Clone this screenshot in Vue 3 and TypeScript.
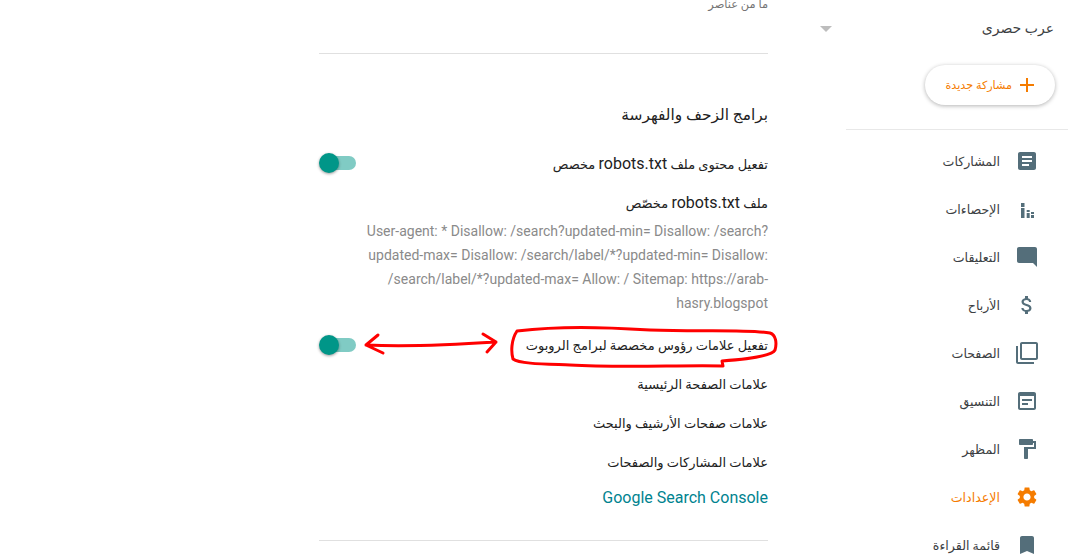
<script setup lang="ts">
interface NavItem { label: string; path: string; active?: boolean }
const nav: NavItem[] = [
  { label: 'المشاركات', path: 'M19 3H5c-1.1 0-2 .9-2 2v14c0 1.1.9 2 2 2h14c1.1 0 2-.9 2-2V5c0-1.1-.9-2-2-2zm-5 14H7v-2h7v2zm3-4H7v-2h10v2zm0-4H7V7h10v2z' },
  { label: 'الإحصاءات', path: 'M6 6h3.5v4H6zM6 11h3.5v10H6zM11.7 13h3v2h-3zM11.7 16h3v5h-3zM16 15h3v2h-3zM16 18h3v3h-3z' },
  { label: 'التعليقات', path: 'M21.99 4c0-1.1-.89-2-1.99-2H4c-1.1 0-2 .9-2 2v12c0 1.1.9 2 2 2h14l4 4-.01-18z' },
  { label: 'الأرباح', path: 'M11.8 10.9c-2.27-.59-3-1.2-3-2.15 0-1.09 1.01-1.85 2.7-1.85 1.78 0 2.44.85 2.5 2.1h2.21c-.07-1.72-1.12-3.3-3.21-3.81V3h-3v2.16c-1.94.42-3.5 1.68-3.5 3.61 0 2.31 1.91 3.46 4.7 4.13 2.5.6 3 1.48 3 2.41 0 .69-.49 1.79-2.7 1.79-2.06 0-2.87-.92-2.98-2.1h-2.2c.12 2.19 1.76 3.42 3.68 3.83V21h3v-2.15c1.95-.37 3.5-1.5 3.5-3.55 0-2.84-2.43-3.81-4.7-4.4z' },
  { label: 'الصفحات', path: 'M3 5H1v16c0 1.1.9 2 2 2h16v-2H3V5zm18-4H7c-1.1 0-2 .9-2 2v14c0 1.1.9 2 2 2h14c1.1 0 2-.9 2-2V3c0-1.1-.9-2-2-2zm0 16H7V3h14v14z' },
  { label: 'التنسيق', path: 'M19 3H5c-1.1 0-2 .9-2 2v14c0 1.1.9 2 2 2h14c1.1 0 2-.9 2-2V5c0-1.1-.9-2-2-2zm0 16H5V7h14v12zM7 10h10v2H7zM7 14h6v2H7z' },
  { label: 'المظهر', path: 'M18 4V3c0-.55-.45-1-1-1H5c-.55 0-1 .45-1 1v4c0 .55.45 1 1 1h12c.55 0 1-.45 1-1V6h1v4H9v11c0 .55.45 1 1 1h2c.55 0 1-.45 1-1v-9h8V4h-3z' },
  { label: 'الإعدادات', active: true, path: 'M19.14 12.94c.04-.3.06-.61.06-.94 0-.32-.02-.64-.07-.94l2.03-1.58c.18-.14.23-.41.12-.61l-1.92-3.32c-.12-.22-.37-.29-.59-.22l-2.39.96c-.5-.38-1.03-.7-1.62-.94l-.36-2.54c-.04-.24-.24-.41-.48-.41h-3.84c-.24 0-.43.17-.47.41l-.36 2.54c-.59.24-1.13.57-1.62.94l-2.39-.96c-.22-.08-.47 0-.59.22L2.74 8.87c-.12.21-.08.47.12.61l2.03 1.58c-.05.3-.09.63-.09.94s.02.64.07.94l-2.03 1.58c-.18.14-.23.41-.12.61l1.92 3.32c.12.22.37.29.59.22l2.39-.96c.5.38 1.03.7 1.62.94l.36 2.54c.05.24.24.41.48.41h3.84c.24 0 .44-.17.47-.41l.36-2.54c.59-.24 1.13-.56 1.62-.94l2.39.96c.22.08.47 0 .59-.22l1.92-3.32c.12-.22.07-.47-.12-.61l-2.01-1.58zM12 15.6c-1.98 0-3.6-1.62-3.6-3.6s1.62-3.6 3.6-3.6 3.6 1.62 3.6 3.6-1.62 3.6-3.6 3.6z' },
  { label: 'قائمة القراءة', path: 'M17 3H7c-1.1 0-1.99.9-1.99 2L5 21l7-3 7 3V5c0-1.1-.9-2-2-2z' },
]
const robots = 'User-agent: * Disallow: /search?updated-min= Disallow: /search?updated-max= Disallow: /search/label/*?updated-min= Disallow: /search/label/*?updated-max= Allow: / Sitemap: https://arab-hasry.blogspot'
</script>

<template>
  <div class="page" dir="rtl">
    <aside class="side">
      <div class="blog">عرب حصرى</div>
      <div class="new-wrap">
        <button class="new">
          <svg class="plus" viewBox="0 0 16 16" width="16" height="16"><path d="M7 1h2v6h6v2H9v6H7V9H1V7h6z" /></svg>
          <span>مشاركة جديدة</span>
        </button>
      </div>
      <hr class="side-rule" />
      <ul class="nav">
        <li v-for="item in nav" :key="item.label" class="nav-item" :class="{ active: item.active }">
          <svg viewBox="0 0 24 24" width="24" height="24" class="nav-icon"><path :d="item.path" /></svg>
          <span>{{ item.label }}</span>
        </li>
      </ul>
    </aside>

    <div class="gutter"><span class="caret"></span></div>

    <main class="main">
      <p class="empty">ما من عناصر</p>
      <hr class="rule first" />
      <h2 class="title">برامج الزحف والفهرسة</h2>
      <div class="row r-toggle">
        <span>تفعيل محتوى ملف <span class="latin">robots.txt</span> مخصص</span>
        <span class="switch"><i></i></span>
      </div>
      <div class="row r-file"><span>ملف <span class="latin">robots.txt</span> مخصّص</span></div>
      <p class="robots"><bdi>{{ robots }}</bdi></p>
      <div class="row r-headers">
        <span>تفعيل علامات رؤوس مخصصة لبرامج الروبوت</span>
        <span class="switch"><i></i></span>
      </div>
      <div class="row r-plain">علامات الصفحة الرئيسية</div>
      <div class="row r-plain">علامات صفحات الأرشيف والبحث</div>
      <div class="row r-plain">علامات المشاركات والصفحات</div>
      <a class="link">Google Search Console</a>
      <hr class="rule last" />
    </main>

    <svg class="marks" width="1068" height="555" viewBox="0 0 1068 555" fill="none" stroke="#f00" stroke-width="3" stroke-linecap="round" stroke-linejoin="round">
      <path d="M517 331C560 326 600 327 650 330C700 332 745 329 770 333C776 335 777 343 775 350C772 356 750 359 722 361L723 366C680 365 620 368 570 365C545 364 520 364 513 359C511 352 511 340 517 331Z" />
      <path d="M366 345C410 347 450 345 496 342M378 335L366 345L383 353M483 334L496 342L487 352" />
    </svg>
  </div>
</template>

<style>
html, body { margin: 0; background: #fff; overflow: hidden; }
</style>

<style scoped>
.page {
  position: relative;
  display: flex;
  width: 1068px;
  height: 555px;
  overflow: hidden;
  font-family: Roboto, "DejaVu Sans", sans-serif;
  color: #212121;
}
.side { width: 222px; flex: none; }
.blog { height: 14px; padding: 21px 14px 0 0; font-size: 14px; line-height: 14px; color: #3c4043; }
.new-wrap { padding: 30px 13px 0 0; }
.new {
  display: flex;
  align-items: center;
  gap: 7px;
  width: 130px;
  height: 40px;
  padding: 0 20px 0 0;
  border: 0;
  border-radius: 20px;
  background: #fff;
  box-shadow: 0 1px 4px rgba(0, 0, 0, .3);
  color: #f57c00;
  font: 11.2px Roboto, "DejaVu Sans", sans-serif;
}
.plus { fill: #f57c00; flex: none; }
.side-rule { margin: 24px 0 0; border: 0; border-top: 1px solid #e8e8e8; }
.nav { list-style: none; margin: 7px 0 0; padding: 0; }
.nav-item {
  display: flex;
  align-items: center;
  gap: 15px;
  height: 48px;
  padding-right: 29px;
  font-size: 12.6px;
  color: #3c4043;
}
.nav-icon { fill: #546e7a; flex: none; }
.active { color: #f57c00; }
.active .nav-icon { fill: #f57c00; }
.gutter { width: 78px; flex: none; padding-top: 26px; }
.caret {
  display: block;
  width: 0;
  margin-right: 14px;
  border: 6px solid transparent;
  border-top: 6px solid #bdbdbd;
  border-bottom: 0;
}
.main { width: 449px; flex: none; }
.empty { margin: -3px 0 0; height: 14px; font-size: 11.4px; line-height: 14px; color: #757575; }
.rule { margin: 0; border: 0; border-top: 1px solid #e0e0e0; }
.first { margin-top: 42px; }
.title { margin: 51px 0 0; height: 20px; font-size: 15.4px; line-height: 20px; font-weight: 500; color: #212121; }
.row {
  display: flex;
  align-items: center;
  justify-content: space-between;
  font-size: 13px;
  color: #212121;
}
.latin { font-size: 16px; }
.r-toggle { margin-top: 26px; height: 24px; }
.r-file { margin-top: 15px; height: 24px; }
.robots {
  margin: 5px 0 0;
  font-size: 14px;
  line-height: 24px;
  color: #8a8a8a;
  word-break: break-word;
}
.r-headers { margin-top: 18px; height: 24px; }
.r-plain { margin-top: 15px; height: 24px; }
.switch { position: relative; display: block; width: 37px; height: 14px; flex: none; }
.switch::before {
  content: "";
  position: absolute;
  left: 2px;
  right: 0;
  top: 0;
  bottom: 0;
  border-radius: 7px;
  background: #80cbc4;
}
.switch i {
  position: absolute;
  left: 0;
  top: -3px;
  width: 20px;
  height: 20px;
  border-radius: 50%;
  background: #009688;
  box-shadow: 0 1px 3px rgba(0, 0, 0, .4);
}
.link { display: block; margin-top: 12px; height: 24px; font-size: 16px; line-height: 24px; color: #00838f; }
.last { margin-top: 30px; }
.marks { position: absolute; left: 0; top: 0; pointer-events: none; }
</style>
